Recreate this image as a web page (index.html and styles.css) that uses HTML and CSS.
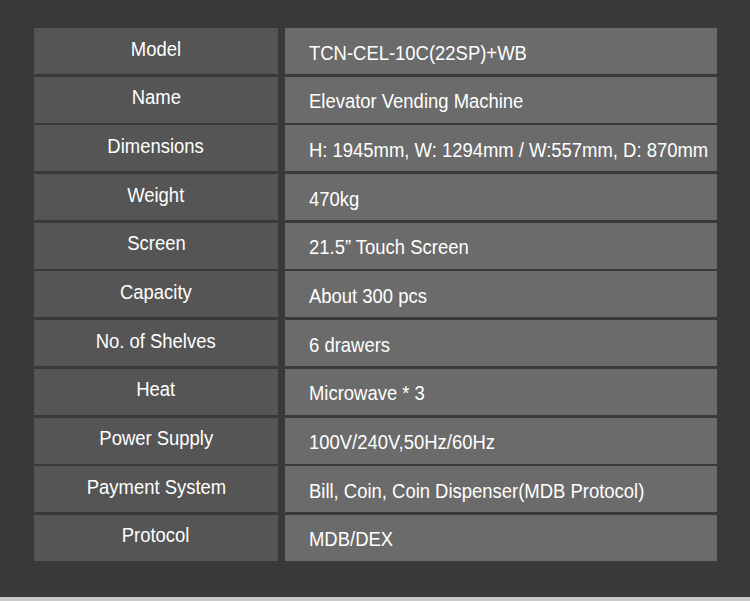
FILE: index.html
```html
<!DOCTYPE html>
<html>
<head>
<meta charset="utf-8">
<link rel="stylesheet" href="styles.css">
</head>
<body>
<div class="page">
  <div class="specs">
    <div class="label"><span>Model</span></div><div class="value"><span>TCN-CEL-10C(22SP)+WB</span></div>
    <div class="label"><span>Name</span></div><div class="value"><span>Elevator Vending Machine</span></div>
    <div class="label"><span>Dimensions</span></div><div class="value"><span>H: 1945mm, W: 1294mm / W:557mm, D: 870mm</span></div>
    <div class="label"><span>Weight</span></div><div class="value"><span>470kg</span></div>
    <div class="label"><span>Screen</span></div><div class="value"><span>21.5” Touch Screen</span></div>
    <div class="label"><span>Capacity</span></div><div class="value"><span>About 300 pcs</span></div>
    <div class="label"><span>No. of Shelves</span></div><div class="value"><span>6 drawers</span></div>
    <div class="label"><span>Heat</span></div><div class="value"><span>Microwave * 3</span></div>
    <div class="label"><span>Power Supply</span></div><div class="value"><span>100V/240V,50Hz/60Hz</span></div>
    <div class="label"><span>Payment System</span></div><div class="value"><span>Bill, Coin, Coin Dispenser(MDB Protocol)</span></div>
    <div class="label"><span>Protocol</span></div><div class="value"><span>MDB/DEX</span></div>
  </div>
</div>
</body>
</html>
```
FILE: styles.css
```css
html, body {
  margin: 0;
  padding: 0;
  background: #393939;
}
.page {
  width: 750px;
  height: 601px;
  box-sizing: border-box;
  padding: 28px 0 0 34px;
  border-bottom: 4px solid #c9c9c9;
  font-family: "Liberation Sans", Arial, sans-serif;
  font-size: 20.5px;
  color: #ffffff;
}
.specs {
  display: grid;
  grid-template-columns: 244px 432px;
  grid-auto-rows: 46px;
  column-gap: 7px;
  row-gap: 2.7px;
}
.specs span {
  display: inline-block;
  transform: scaleX(0.9);
  white-space: nowrap;
}
.label {
  background: #555555;
  display: flex;
  align-items: center;
  justify-content: center;
  padding-bottom: 5px;
  box-sizing: border-box;
}
.label span {
  transform-origin: center;
}
.value {
  background: #6b6b6b;
  display: flex;
  align-items: center;
  padding-left: 24px;
  padding-top: 3px;
  box-sizing: border-box;
  overflow: hidden;
}
.value span {
  transform-origin: left center;
}
```
